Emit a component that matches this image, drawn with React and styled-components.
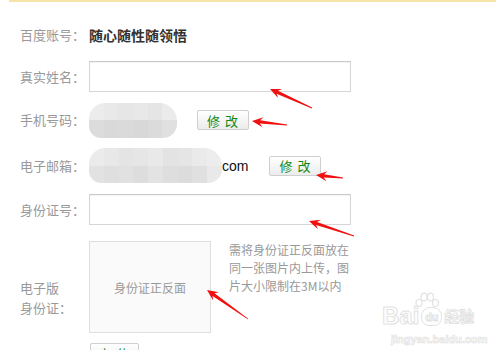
import React from "react";
import styled, { createGlobalStyle } from "styled-components";

const GlobalStyle = createGlobalStyle`
  html, body { margin: 0; padding: 0; background: #fff; }
  body { font-family: "Noto Sans CJK SC", "Liberation Sans", sans-serif; }
`;

const Page = styled.div`
  position: relative;
  width: 500px;
  height: 350px;
  overflow: hidden;
  background: #fff;
`;

const TopLine = styled.div`
  height: 2px;
  margin: 0 4px 0 9px;
  background: #f6e4a9;
`;

const Form = styled.div`
  display: flex;
  flex-direction: column;
  gap: 11px;
  padding: 18px 0 0 20px;
`;

const Row = styled.div`
  display: flex;
  align-items: ${(p) => (p.$top ? "flex-start" : "center")};
  height: ${(p) => p.$h}px;
  margin-top: ${(p) => p.$mt || 0}px;
  flex: none;
`;

const Label = styled.div`
  width: 69px;
  flex: none;
  font-size: 13px;
  line-height: 20px;
  color: #999;
  white-space: nowrap;
  padding-top: ${(p) => p.$pt || 0}px;
`;

const Value = styled.div`
  font-size: 14px;
  font-weight: bold;
  color: #333;
`;

const TextInput = styled.div`
  width: 262px;
  height: 31px;
  box-sizing: border-box;
  border: 1px solid #d6d6d6;
  border-top-color: #c9c9c9;
  box-shadow: inset 0 1px 1px rgba(0, 0, 0, 0.05);
  background: #fff;
`;

const Button = styled.div`
  display: flex;
  align-items: center;
  justify-content: center;
  width: ${(p) => p.$w || 52}px;
  height: 20px;
  box-sizing: border-box;
  margin-left: ${(p) => p.$ml || 0}px;
  border: 1px solid #cfcfcf;
  border-radius: 2px;
  background: linear-gradient(#ffffff, #ececec);
  color: #118811;
  font-size: 13px;
  letter-spacing: 1px;
  white-space: pre;
  flex: none;
`;

const Mosaic = styled.div`
  display: grid;
  grid-template-columns: repeat(${(p) => p.$cols}, 1fr);
  grid-template-rows: 1fr 1fr;
  width: ${(p) => p.$w}px;
  height: 35px;
  border-radius: 16px 18px 14px 12px;
  overflow: hidden;
  filter: blur(0.6px);
  flex: none;
`;

const Cell = styled.div`
  background: ${(p) => p.$c};
`;

const Com = styled.span`
  font-family: "Liberation Sans", Arial, sans-serif;
  font-size: 14px;
  color: #111;
`;

const PhotoBox = styled.div`
  display: flex;
  align-items: center;
  justify-content: center;
  width: 122px;
  height: 92px;
  box-sizing: border-box;
  border: 1px solid #dedede;
  background: #fafafa;
  color: #999;
  font-size: 12px;
  flex: none;
`;

const Help = styled.div`
  margin-left: 18px;
  font-size: 12px;
  line-height: 18px;
  color: #999;
  white-space: nowrap;
`;

const Overlay = styled.svg`
  position: absolute;
  left: 0;
  top: 0;
  pointer-events: none;
`;

const Watermark = styled.div`
  position: absolute;
  left: 382px;
  top: 292px;
  width: 100px;
`;

const WmLine = styled.div`
  display: flex;
  align-items: flex-end;
  margin-top: 11px;
`;

const WmBig = styled.span`
  font-family: "Liberation Sans", Arial, sans-serif;
  font-weight: bold;
  font-size: 24px;
  line-height: 26px;
  color: #fff;
  -webkit-text-stroke: 1px #e2e2e2;
`;

const WmDu = styled.span`
  display: inline-flex;
  align-items: center;
  justify-content: center;
  width: 19px;
  height: 17px;
  margin: 0 2px 3px 2px;
  border: 1.5px solid #e2e2e2;
  border-radius: 9px 9px 8px 8px;
  font-family: "Liberation Sans", Arial, sans-serif;
  font-size: 11px;
  font-weight: bold;
  color: #fff;
  -webkit-text-stroke: 0.8px #dedede;
`;

const WmCn = styled.span`
  font-size: 15px;
  line-height: 22px;
  font-weight: bold;
  color: #fff;
  -webkit-text-stroke: 0.8px #e0e0e0;
  margin-bottom: 2px;
`;

const WmUrl = styled.div`
  font-family: "Liberation Sans", Arial, sans-serif;
  font-size: 11px;
  font-weight: bold;
  color: #fff;
  -webkit-text-stroke: 0.7px #e2e2e2;
  margin: 4px 0 0 9px;
`;

const Paw = styled.svg`
  position: absolute;
  left: 32px;
  top: 0px;
`;

const phoneCells = [
  "#ececec", "#e9e9e9", "#e6e6e6", "#e8e8e8", "#e5e5e5", "#ebebeb",
  "#dcdcdc", "#d9d9d9", "#dadada", "#d8d8d8", "#dbdbdb", "#e0e0e0",
];
const mailCells = [
  "#ebebeb", "#e8e8e8", "#e4e4e4", "#e6e6e6", "#e9e9e9", "#e3e3e3", "#e5e5e5", "#eaeaea", "#ededed",
  "#e2e2e2", "#dfdfdf", "#e1e1e1", "#dddddd", "#e3e3e3", "#dedede", "#dcdcdc", "#e0e0e0", "#e9e9e9",
];

function arrowPoints(tx, ty, ex, ey) {
  const dx = ex - tx;
  const dy = ey - ty;
  const L = Math.hypot(dx, dy);
  const ux = dx / L;
  const uy = dy / L;
  const px = -uy;
  const py = ux;
  const bx = tx + ux * 11;
  const by = ty + uy * 11;
  const nx = tx + ux * 8;
  const ny = ty + uy * 8;
  const pts = [
    [tx, ty],
    [bx + px * 5, by + py * 5],
    [nx + px * 1.6, ny + py * 1.6],
    [ex + px * 0.4, ey + py * 0.4],
    [ex - px * 0.4, ey - py * 0.4],
    [nx - px * 1.6, ny - py * 1.6],
    [bx - px * 5, by - py * 5],
  ];
  return pts.map((p) => p.map((v) => v.toFixed(1)).join(",")).join(" ");
}

const arrows = [
  [270, 89, 312, 108],
  [252, 121, 287, 125],
  [316, 175, 343, 178],
  [309, 221, 354, 236],
  [207, 290, 248, 319],
];

export default function App() {
  return (
    <Page>
      <GlobalStyle />
      <TopLine />
      <Form>
        <Row $h={30}>
          <Label>百度账号：</Label>
          <Value>随心随性随领悟</Value>
        </Row>
        <Row $h={31}>
          <Label>真实姓名：</Label>
          <TextInput />
        </Row>
        <Row $h={34}>
          <Label>手机号码：</Label>
          <Mosaic $w={88} $cols={6}>
            {phoneCells.map((c, i) => (
              <Cell key={i} $c={c} />
            ))}
          </Mosaic>
          <Button $ml={20}>修 改</Button>
        </Row>
        <Row $h={35}>
          <Label>电子邮箱：</Label>
          <Mosaic $w={133} $cols={9}>
            {mailCells.map((c, i) => (
              <Cell key={i} $c={c} />
            ))}
          </Mosaic>
          <Com>com</Com>
          <Button $ml={21}>修 改</Button>
        </Row>
        <Row $h={31}>
          <Label>身份证号：</Label>
          <TextInput />
        </Row>
        <Row $h={91} $mt={5} $top>
          <Label $pt={37}>
            电子版
            <br />
            身份证：
          </Label>
          <PhotoBox>身份证正反面</PhotoBox>
          <Help>
            需将身份证正反面放在
            <br />
            同一张图片内上传，图
            <br />
            片大小限制在3M以内
          </Help>
        </Row>
        <Row $h={20}>
          <Label />
          <Button $w={49} $ml={1}>上 传</Button>
        </Row>
      </Form>

      <Watermark>
        <Paw width="26" height="16" viewBox="0 0 26 16">
          <g fill="#fff" stroke="#e2e2e2" strokeWidth="1.2">
            <ellipse cx="5" cy="11" rx="3" ry="3.5" />
            <ellipse cx="10" cy="5" rx="3" ry="3.8" />
            <ellipse cx="16.5" cy="5" rx="3" ry="3.8" />
            <ellipse cx="21.5" cy="11" rx="3" ry="3.5" />
          </g>
        </Paw>
        <WmLine>
          <WmBig>Bai</WmBig>
          <WmDu>du</WmDu>
          <WmCn>经验</WmCn>
        </WmLine>
        <WmUrl>jingyan.baidu.com</WmUrl>
      </Watermark>

      <Overlay width="500" height="350" viewBox="0 0 500 350">
        {arrows.map((a, i) => (
          <polygon key={i} points={arrowPoints(...a)} fill="#f01010" />
        ))}
      </Overlay>
    </Page>
  );
}
